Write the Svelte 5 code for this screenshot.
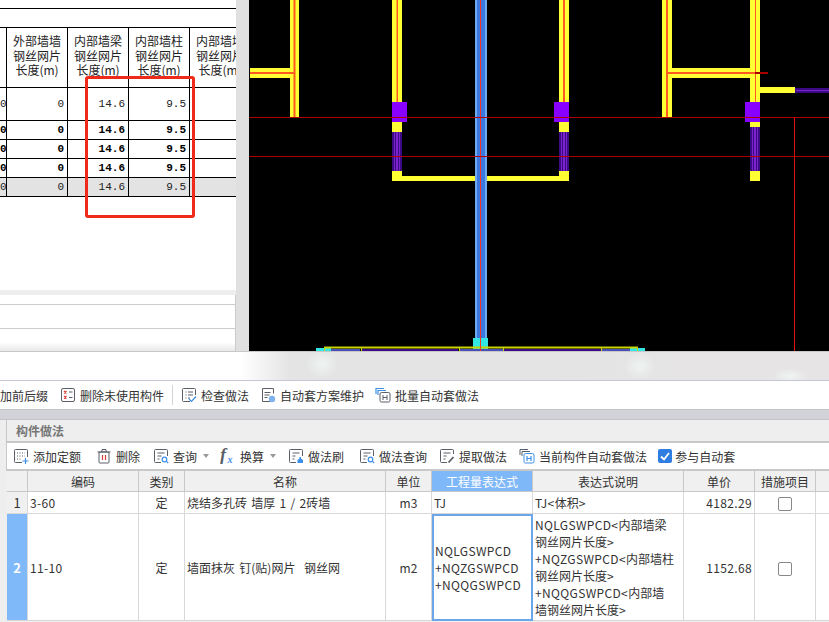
<script lang="ts">
	const headCols = [
		['外部墙墙', '钢丝网片', '长度(m)'],
		['内部墙梁', '钢丝网片', '长度(m)'],
		['内部墙柱', '钢丝网片', '长度(m)'],
		['内部墙墙', '钢丝网片', '长度(m)'],
	];
	const qtyRows = [
		{ cls: 'tall', vals: ['0', '0', '14.6', '9.5', ''] },
		{ cls: 'bold', vals: ['0', '0', '14.6', '9.5', ''] },
		{ cls: 'bold', vals: ['0', '0', '14.6', '9.5', ''] },
		{ cls: 'bold', vals: ['0', '0', '14.6', '9.5', ''] },
		{ cls: 'grey', vals: ['0', '0', '14.6', '9.5', ''] },
	];

	const S = 'fill="none" stroke="#5a5f68" stroke-width="1"';
	const B = 'fill="none" stroke="#3d8fe8" stroke-width="1.2"';
	const lines = `<path ${S} d="M4.5 5h1M7 5h5M4.5 8h1M7 8h5M4.5 11h1M7 11h2"/>`;
	const icons: Record<string, string> = {
		unused: `<rect ${S} x="1.5" y="1.5" width="13" height="13" rx="1.5"/><path fill="none" stroke="#d8403a" stroke-width="1.2" d="M4 4l2.5 2.5M6.5 4L4 6.5M4 9l2.5 2.5M6.5 9L4 11.5"/><path ${S} d="M9 5h3.5M9 10.5h3.5"/>`,
		check: `<path ${S} d="M9 14.5H2.5a1 1 0 0 1-1-1v-11a1 1 0 0 1 1-1h11a1 1 0 0 1 1 1V8"/>${lines}<path ${B} d="M8 12l2.5 2.5L15 9.5"/>`,
		scheme: `<path ${S} d="M4 1.5h9.5v5M10 14.5H2.5v-13H4"/><path ${S} d="M4.5 5.5h6M4.5 8h5M4.5 10.5h3"/><circle cx="12" cy="12" r="3.2" fill="#7fb3ee"/>`,
		batch: `<path ${B} d="M1 7V1.5h8M3 8V3.5h8"/><rect ${S} x="5" y="5.5" width="10" height="9.5" rx="1.5"/><path ${S} d="M8 8v5M12 8v5M8 10.5h4"/>`,
		add: `<path ${S} d="M9 14.5H2.5a1 1 0 0 1-1-1v-11a1 1 0 0 1 1-1h11a1 1 0 0 1 1 1V9"/><path ${S} stroke-dasharray="1 1.5" d="M4 5h8M4 8h8M4 11h4"/><path ${B} d="M9.5 13h6M12.5 10v6"/>`,
		del: `<path ${S} d="M3 4h10v10a1 1 0 0 1-1 1H4a1 1 0 0 1-1-1zM1.5 4h13M6 4V1.5h4V4"/><path fill="none" stroke="#d8403a" stroke-width="1.2" d="M6.5 7v5M9.5 7v5"/>`,
		query: `<path ${S} d="M8 14.5H2.5a1 1 0 0 1-1-1v-11a1 1 0 0 1 1-1h11a1 1 0 0 1 1 1V8"/><path ${S} d="M4.5 5h7M4.5 8h4M4.5 11h2"/><circle ${B} cx="11.5" cy="11.5" r="2.3"/><path ${B} d="M13.2 13.2l2 2"/>`,
		fx: `<text x="0" y="13" font-family="Liberation Serif" font-style="italic" font-weight="700" font-size="18" fill="#5a5f68">f</text><text x="7.5" y="14.5" font-family="Liberation Serif" font-style="italic" font-weight="700" font-size="10" fill="#3d8fe8">x</text>`,
		brush: `<path ${S} d="M8 14.5H2.5a1 1 0 0 1-1-1v-11a1 1 0 0 1 1-1h11a1 1 0 0 1 1 1V8"/><path ${S} d="M4.5 5h7M4.5 8h3M4.5 11h2"/><path fill="#3d8fe8" d="M9.5 15v-3l2-1.5V9H13v1.5l2 1.5v3z"/>`,
		pick: `<path ${S} d="M14.5 6V2.5a1 1 0 0 0-1-1h-11a1 1 0 0 0-1 1v11a1 1 0 0 0 1 1H8"/><path ${S} d="M4.5 5h7M4.5 8h3M4.5 11h2"/><path fill="none" stroke="#5a5f68" stroke-width="1.8" d="M9.5 14.5L14.500 9"/>`,
		auto: `<path ${S} d="M1 7V1.5h8M3 8V3.5h8"/><rect fill="none" stroke="#3d8fe8" stroke-width="1" x="5" y="5.5" width="10" height="9.5" rx="1.5"/><path ${B} d="M8 8v5M12 8v5M8 10.5h4"/>`,
	};

	const bar1 = [
		{ icon: 'unused', text: '删除未使用构件', gap: 8 },
		{ icon: 'check', text: '检查做法', gap: 11, sep: true },
		{ icon: 'scheme', text: '自动套方案维护', gap: 11 },
		{ icon: 'batch', text: '批量自动套做法', gap: 0 },
	];
	const bar2 = [
		{ icon: 'add', text: '添加定额', gap: 15 },
		{ icon: 'del', text: '删除', gap: 13 },
		{ icon: 'query', text: '查询', caret: true, gap: 11 },
		{ icon: 'fx', text: '换算', caret: true, gap: 12 },
		{ icon: 'brush', text: '做法刷', gap: 15 },
		{ icon: 'query', text: '做法查询', gap: 12 },
		{ icon: 'pick', text: '提取做法', gap: 12 },
		{ icon: 'auto', text: '当前构件自动套做法', gap: 11 },
	];

	// 底部一排构件的蓝紫色条
	const footBars = [
		{ x: 331, w: 29, c: '#4a4fb8' },
		{ x: 361, w: 97, c: '#3d0a86' },
		{ x: 460, w: 43, c: '#4a4fb8' },
		{ x: 504, w: 97, c: '#3d0a86' },
		{ x: 602, w: 28, c: '#4a4fb8' },
	];
	const footTicks = [324, 361, 459, 503, 601, 637];
</script>

{#snippet tool(item)}
	<span class="tool" style="margin-right: {item.gap}px">
		<svg class="ico" viewBox="0 0 16 16" width="16" height="16">{@html icons[item.icon]}</svg>
		<span>{item.text}</span>
		{#if item.caret}<i class="caret"></i>{/if}
	</span>
{/snippet}

<div class="page">
	<section class="top">
		<div class="qty-pane">
			<div class="qty-head"></div>
			<table class="qty">
				<colgroup>
					<col style="width: 7px" />
					<col style="width: 61px" />
					<col style="width: 61px" />
					<col style="width: 61px" />
					<col style="width: 61px" />
				</colgroup>
				<thead>
					<tr>
						<th></th>
						{#each headCols as col}
							<th>{col[0]}<br />{col[1]}<br />{col[2]}</th>
						{/each}
					</tr>
				</thead>
				<tbody>
					{#each qtyRows as row}
						<tr class={row.cls}>
							{#each row.vals as v}
								<td>{v}</td>
							{/each}
						</tr>
					{/each}
				</tbody>
			</table>
			<div class="qty-rest"></div>
			<div class="qty-strip"></div>
			<div class="qty-blank a"></div>
			<div class="qty-blank b"></div>
			<div class="qty-blank c"></div>
			<div class="mark"></div>
		</div>
		<div class="split"></div>
		<div class="cad">
			<svg viewBox="249 0 580 351" width="580" height="351">
				<rect x="249" y="0" width="580" height="351" fill="#000" />

				<!-- 墙 -->
				<g fill="#ffff33">
					<rect x="290" y="0" width="9" height="117" />
					<rect x="250" y="68" width="44" height="10" />
					<rect x="392" y="0" width="10" height="103" />
					<rect x="392" y="121" width="10" height="60" />
					<rect x="392" y="176" width="177" height="5" />
					<rect x="559" y="0" width="10" height="103" />
					<rect x="559" y="121" width="10" height="60" />
					<rect x="662" y="0" width="10" height="117" />
					<rect x="667" y="68" width="88" height="10" />
					<rect x="750" y="0" width="10" height="103" />
					<rect x="750" y="121" width="10" height="60" />
					<rect x="760" y="87" width="35" height="6" />
				</g>

				<!-- 墙中线 -->
				<g fill="#ff5a22">
					<rect x="293.5" y="0" width="2" height="117" />
					<rect x="250" y="72" width="44" height="2" />
					<rect x="396.5" y="0" width="1.5" height="117" />
					<rect x="563" y="0" width="2" height="117" />
					<rect x="666" y="0" width="2" height="117" />
					<rect x="667" y="72" width="88" height="2" />
					<rect x="755" y="0" width="1" height="117" />
				</g>
				<rect x="755" y="72" width="13" height="2" fill="#a80000" />

				<!-- 暗柱 -->
				<g fill="#8800ff">
					<rect x="392" y="102" width="15" height="20" />
					<rect x="554" y="102" width="15" height="20" />
					<rect x="745" y="102" width="15" height="20" />
				</g>

				<!-- 钢丝网片段 -->
				<g fill="#3d0a86">
					<rect x="392" y="132" width="10" height="39" />
					<rect x="559" y="132" width="10" height="39" />
					<rect x="750" y="127" width="10" height="44" />
					<rect x="795" y="88" width="34" height="5" />
				</g>
				<g fill="#7a22cc">
					<rect x="394" y="132" width="1" height="39" />
					<rect x="396" y="132" width="2" height="39" />
					<rect x="399" y="132" width="1" height="39" />
					<rect x="561" y="132" width="1" height="39" />
					<rect x="563" y="132" width="2" height="39" />
					<rect x="566" y="132" width="1" height="39" />
					<rect x="752" y="127" width="1" height="44" />
					<rect x="754" y="127" width="2" height="44" />
					<rect x="757" y="127" width="1" height="44" />
					<rect x="796" y="90" width="33" height="1" />
				</g>

				<!-- 中间竖向构件 -->
				<rect x="475" y="0" width="12" height="340" fill="#6fa9f0" />
				<rect x="477" y="0" width="8" height="340" fill="#3b79e0" />
				<rect x="480" y="0" width="1" height="351" fill="#ff3322" />

				<!-- 轴线 -->
				<g fill="#b00000">
					<rect x="249" y="117" width="580" height="1" />
					<rect x="249" y="156" width="580" height="1" />
				</g>
				<rect x="794" y="117" width="1" height="234" fill="#e01010" />

				<!-- 底部 -->
				<g fill="#33e6e6">
					<rect x="316" y="348" width="15" height="3" />
					<rect x="630" y="348" width="15" height="3" />
					<rect x="473" y="338" width="15" height="13" />
				</g>
				{#each footBars as b}
					<rect x={b.x} y="349" width={b.w} height="2" fill={b.c} />
				{/each}
				<rect x="324" y="346.5" width="314" height="2" fill="#c8d400" />
				{#each footTicks as t}
					<rect x={t} y="347" width="1" height="4" fill="#c8d400" />
				{/each}
				<rect x="480" y="338" width="1" height="13" fill="#ff3322" />
			</svg>
		</div>
	</section>

	<div class="blur-band"></div>

	<div class="bar1">
		<span class="cut">添加前后缀</span>
		{#each bar1 as item}
			{#if item.sep}<i class="vsep"></i>{/if}
			{@render tool(item)}
		{/each}
	</div>

	<div class="gap-strip"></div>

	<section class="method">
		<div class="method-title">构件做法</div>
		<div class="bar2">
			{#each bar2 as item}
				{@render tool(item)}
			{/each}
			<label class="join">
				<span class="tick">
					<svg viewBox="0 0 14 14" width="14" height="14"><path d="M3 7.5l3 3 5-6.5" fill="none" stroke="#fff" stroke-width="1.8" /></svg>
				</span>
				<span>参与自动套</span>
			</label>
		</div>
		<table class="grid">
			<colgroup>
				<col style="width: 21px" />
				<col style="width: 111px" />
				<col style="width: 46px" />
				<col style="width: 201px" />
				<col style="width: 46px" />
				<col style="width: 101px" />
				<col style="width: 151px" />
				<col style="width: 71px" />
				<col style="width: 61px" />
				<col style="width: 13px" />
			</colgroup>
			<thead>
				<tr>
					<th></th>
					<th>编码</th>
					<th>类别</th>
					<th>名称</th>
					<th>单位</th>
					<th class="active">工程量表达式</th>
					<th>表达式说明</th>
					<th>单价</th>
					<th>措施项目</th>
					<th class="last"></th>
				</tr>
			</thead>
			<tbody>
				<tr class="r1">
					<td class="no">1</td>
					<td class="code">3-60</td>
					<td class="c">定</td>
					<td class="name">烧结多孔砖 墙厚 1 / 2砖墙</td>
					<td class="c">m3</td>
					<td>TJ</td>
					<td><span class="ltr">TJ&lt;</span>体积&gt;</td>
					<td class="num">4182.29</td>
					<td class="c"><span class="box"></span></td>
					<td class="last"></td>
				</tr>
				<tr class="r2">
					<td class="no sel">2</td>
					<td class="code">11-10</td>
					<td class="c">定</td>
					<td class="name">墙面抹灰 钉(贴)网片&nbsp; 钢丝网</td>
					<td class="c">m2</td>
					<td class="editing"><span class="ltr">NQLGSWPCD<br />+NQZGSWPCD<br />+NQQGSWPCD</span></td>
					<td class="desc"><span class="ltr">NQLGSWPCD&lt;</span>内部墙梁<br />钢丝网片长度&gt;<br /><span class="ltr">+NQZGSWPCD&lt;</span>内部墙柱<br />钢丝网片长度&gt;<br /><span class="ltr">+NQQGSWPCD&lt;</span>内部墙<br />墙钢丝网片长度&gt;</td>
					<td class="num">1152.68</td>
					<td class="c"><span class="box"></span></td>
					<td class="last"></td>
				</tr>
			</tbody>
		</table>
	</section>
</div>

<style>
	:global(body) {
		margin: 0;
		background: #fff;
	}

	.page {
		width: 829px;
		height: 622px;
		overflow: hidden;
		display: flex;
		flex-direction: column;
		font-family: 'Noto Sans CJK SC', 'Liberation Sans', sans-serif;
		font-size: 12px;
		color: #333;
	}

	.top {
		display: flex;
		height: 351px;
		flex: none;
	}

	.qty-pane {
		position: relative;
		width: 236px;
		flex: none;
		overflow: hidden;
		display: flex;
		flex-direction: column;
		background: #fff;
	}

	.qty-head {
		height: 8px;
		flex: none;
		border-bottom: 1px solid #000;
		margin-bottom: 18px;
	}

	.qty {
		table-layout: fixed;
		width: 251px;
		flex: none;
		border-collapse: separate;
		border-spacing: 0;
		border-top: 1px solid #000;
		color: #222;
	}

	.qty th,
	.qty td {
		box-sizing: border-box;
		padding: 0;
		border-right: 1px solid #000;
		border-bottom: 1px solid #000;
	}

	.qty th {
		height: 60px;
		padding-bottom: 3px;
		font-weight: 400;
		font-size: 12px;
		line-height: 14.5px;
		white-space: nowrap;
		overflow: hidden;
	}

	.qty td {
		height: 19px;
		padding-right: 3px;
		text-align: right;
		font-family: 'Liberation Mono', monospace;
		font-size: 11px;
		overflow: hidden;
	}

	.qty tr.tall td {
		height: 33px;
	}

	.qty tr.bold td {
		font-weight: 700;
		color: #000;
	}

	.qty tr.grey td {
		background: #e3e3e3;
	}

	.qty-rest {
		flex: 1;
	}

	.qty-strip {
		height: 5px;
		flex: none;
		background: #eee;
	}

	.qty-blank {
		flex: none;
		border-right: 1px solid #ccc;
	}

	.qty-blank.a {
		height: 9px;
	}

	.qty-blank.b {
		height: 23px;
		border-top: 1px solid #ccc;
	}

	.qty-blank.c {
		height: 22px;
		border-top: 1px solid #ccc;
		background: linear-gradient(#fff 60%, #e8e8e8);
	}

	.mark {
		position: absolute;
		left: 85px;
		top: 76px;
		width: 110px;
		height: 142px;
		box-sizing: border-box;
		border: 3px solid #f02a1a;
		border-radius: 3px;
	}

	.split {
		width: 13px;
		flex: none;
		background: #e0e0e0;
	}

	.cad {
		flex: 1;
		min-width: 0;
		background: #000;
		line-height: 0;
	}

	.blur-band {
		height: 28px;
		flex: none;
		border-top: 1px solid #c8c8c8;
		background:
			radial-gradient(ellipse 16px 14px at 322px 12px, #eef4f2, transparent),
			radial-gradient(ellipse 16px 14px at 640px 14px, #eef4f2, transparent),
			radial-gradient(ellipse 18px 8px at 790px 24px, #eef4f2, transparent),
			linear-gradient(to right, #fff 240px, #e4e4e4 290px, #e6e4e4 829px);
	}

	.bar1 {
		height: 28px;
		flex: none;
		display: flex;
		align-items: center;
		border-top: 1px solid #c4c8d0;
		background: #fff;
		white-space: nowrap;
		overflow: hidden;
	}

	.cut {
		margin-left: -12px;
		margin-right: 12px;
	}

	.tool {
		display: inline-flex;
		align-items: center;
		gap: 4px;
		white-space: nowrap;
	}

	.ico {
		flex: none;
	}

	.vsep {
		width: 1px;
		height: 20px;
		background: #d4d4d4;
		margin-right: 8px;
	}

	.caret {
		width: 0;
		height: 0;
		margin-left: 2px;
		border-left: 3px solid transparent;
		border-right: 3px solid transparent;
		border-top: 4px solid #999;
	}

	.gap-strip {
		height: 9px;
		flex: none;
		background: #d2d3d8;
		border-top: 1px solid #c4c4c8;
		border-bottom: 1px solid #c4c4c8;
	}

	.method {
		flex: 1;
		min-height: 0;
		padding-left: 6px;
		background: #eee;
	}

	.method-title {
		height: 21px;
		line-height: 21px;
		padding-left: 9px;
		font-weight: 700;
		color: #777;
		border-left: 1px solid #c8c8c8;
	}

	.bar2 {
		height: 26px;
		display: flex;
		align-items: center;
		padding-left: 6px;
		background: #fff;
		border-top: 2px solid #c8c8c8;
		border-bottom: 2px solid #c8c8c8;
		border-left: 1px solid #c8c8c8;
		white-space: nowrap;
		overflow: hidden;
	}

	.join {
		display: inline-flex;
		align-items: center;
		gap: 3px;
	}

	.tick {
		width: 14px;
		height: 14px;
		border-radius: 2px;
		background: #2f7de1;
		line-height: 0;
	}

	.grid {
		table-layout: fixed;
		width: 822px;
		margin-left: 1px;
		border-collapse: separate;
		border-spacing: 0;
		background: #fff;
	}

	.grid th,
	.grid td {
		box-sizing: border-box;
		padding: 0 2px;
		border-right: 1px solid #d8d8d8;
		border-bottom: 1px solid #d8d8d8;
		overflow: hidden;
		white-space: nowrap;
	}

	.grid th {
		height: 21px;
		font-weight: 400;
		background: #f0f0f0;
		border-right-color: #c8c8c8;
		border-bottom-color: #c8c8c8;
	}

	.grid th.active {
		background: #7fb8f8;
		color: #fff;
	}

	.grid th.last,
	.grid td.last {
		border-right: 0;
	}

	.r1 td {
		height: 22px;
	}

	.r2 td {
		height: 107px;
	}

	.ltr,
	.code,
	.num {
		letter-spacing: 0.35px;
	}

	.name {
		word-spacing: 1.6px;
	}

	.grid td.no {
		background: #f0f0f0;
		text-align: center;
		padding: 0;
		font-size: 13px;
	}

	.grid td.sel {
		background: #7fb9f9;
		color: #fff;
		font-weight: 700;
	}

	.grid td.c {
		text-align: center;
	}

	.grid td.num {
		text-align: right;
	}

	.grid td.editing {
		border: 2px solid #6aa6e8;
		line-height: 17px;
		padding: 0 1px;
	}

	.grid td.desc {
		line-height: 17px;
	}

	.box {
		display: inline-block;
		box-sizing: border-box;
		width: 14px;
		height: 14px;
		border: 1px solid #888;
		border-radius: 2px;
		vertical-align: middle;
	}
</style>
